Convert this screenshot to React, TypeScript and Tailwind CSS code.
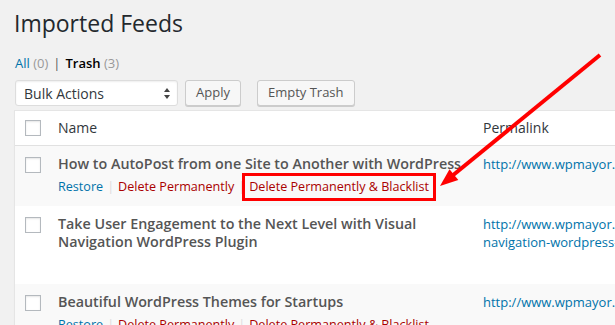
import React from 'react';

const Checkbox = () => (
    <div className="w-4 h-4 bg-white border border-[#b4b9be] shadow-[inset_0_1px_2px_rgba(0,0,0,0.1)]" />
);

const Sep = () => <span className="text-[#ddd] mx-[4px]">|</span>;

const Actions = ({ mark, hidden }: { mark?: boolean; hidden?: boolean }) => (
    <div className={`pt-[4px] text-[12.6px] leading-[20px] whitespace-nowrap ${hidden ? 'invisible' : ''}`}>
        <span className="text-[#0073aa]">Restore</span>
        <Sep />
        <span className="text-[#a00]">Delete Permanently</span>
        <Sep />
        <span className="relative text-[#a00]">
            Delete Permanently &amp; Blacklist
            {mark && (
                <span className="absolute -left-[7px] -top-[5px] -right-[7px] -bottom-[6px] border-[3px] border-[#ff0000]" />
            )}
        </span>
    </div>
);

const rows = [
    {
        title: ['How to AutoPost from one Site to Another with WordPress'],
        link: ['http://www.wpmayor.com/how-to-autopost-from-one-site-to-another/'],
        actions: true,
        mark: true,
        bg: 'bg-[#f9f9f9]',
    },
    {
        title: ['Take User Engagement to the Next Level with Visual', 'Navigation WordPress Plugin'],
        link: ['http://www.wpmayor.com/take-user-engagement-to-the-next-level-with-visual-', 'navigation-wordpress-plugin/'],
        actions: false,
        bg: 'bg-white',
    },
    {
        title: ['Beautiful WordPress Themes for Startups'],
        link: ['http://www.wpmayor.com/beautiful-wordpress-themes-for-startups/'],
        actions: true,
        bg: 'bg-[#f9f9f9]',
    },
];

export default function App() {
    return (
        <div className="relative w-[615px] h-[325px] overflow-hidden bg-[#f1f1f1] pl-[14px] font-['Open_Sans',sans-serif] text-[#444]">
            <h1 className="pt-[9px] text-[23px] leading-[29px] font-normal text-[#23282d]">Imported Feeds</h1>

            <div className="mt-[15px] pl-[1px] text-[13px] leading-[20px] text-[#555]">
                <span className="text-[#0073aa]">All</span> <span className="text-[#999]">(0)</span>
                <span className="mx-[5px] text-[#555]">|</span>
                <span className="font-semibold text-[#000]">Trash</span> <span className="text-[#999]">(3)</span>
            </div>

            <div className="mt-[7px] pl-[1px] flex items-center h-[26px]">
                <div className="w-[163px] h-[26px] flex items-center justify-between bg-white border border-[#ddd] rounded-[3px] pl-[8px] pr-[7px] text-[14px] text-[#32373c] shadow-[inset_0_1px_2px_rgba(0,0,0,0.07)]">
                    <span>Bulk Actions</span>
                    <svg width="6" height="11" viewBox="0 0 6 11">
                        <path d="M3 0 L6 4 L0 4 Z" fill="#444" />
                        <path d="M3 11 L6 7 L0 7 Z" fill="#444" />
                    </svg>
                </div>
                <div className="ml-[7px] h-[26px] px-[10px] flex items-center bg-[#f7f7f7] border border-[#ccc] rounded-[3px] shadow-[0_1px_0_#ccc] text-[13px] text-[#555]">
                    Apply
                </div>
                <div className="ml-[16px] h-[26px] px-[10px] flex items-center bg-[#f7f7f7] border border-[#ccc] rounded-[3px] shadow-[0_1px_0_#ccc] text-[13px] text-[#555]">
                    Empty Trash
                </div>
            </div>

            <div className="mt-[4px] w-[720px] bg-white border border-[#e5e5e5] shadow-[0_1px_1px_rgba(0,0,0,0.04)]">
                <div className="flex border-b border-[#e1e1e1]">
                    <div className="w-[33px] shrink-0 pl-[10px] pt-[9px]">
                        <Checkbox />
                    </div>
                    <div className="w-[425px] shrink-0 pl-[10px] pt-[8px] pb-[8px] text-[14px] leading-[18px] text-[#32373c]">Name</div>
                    <div className="pl-[10px] pt-[8px] pb-[8px] text-[14px] leading-[18px] text-[#32373c]">Permalink</div>
                </div>

                {rows.map((row, i) => (
                    <div key={i} className={`flex ${row.bg}`}>
                        <div className="w-[33px] shrink-0 pl-[10px] pt-[11px]">
                            <Checkbox />
                        </div>
                        <div className="w-[425px] shrink-0 pl-[10px] pt-[9px] pb-[9px]">
                            {row.title.map((t) => (
                                <div key={t} className="text-[14.3px] leading-[18px] font-semibold text-[#555] whitespace-nowrap">
                                    {t}
                                </div>
                            ))}
                            <Actions mark={row.mark} hidden={!row.actions} />
                        </div>
                        <div className="pl-[10px] pt-[9px] overflow-hidden">
                            {row.link.map((l) => (
                                <div key={l} className="text-[13px] leading-[18px] text-[#0073aa] whitespace-nowrap">
                                    {l}
                                </div>
                            ))}
                        </div>
                    </div>
                ))}
            </div>

            <svg className="absolute left-0 top-0 pointer-events-none" width="615" height="325" viewBox="0 0 615 325">
                <line x1="600" y1="55" x2="452" y2="176" stroke="#ff0000" strokeWidth="4" />
                <polygon points="440,186 449.5,169.2 458.3,180" fill="#ff0000" />
            </svg>
        </div>
    );
}
